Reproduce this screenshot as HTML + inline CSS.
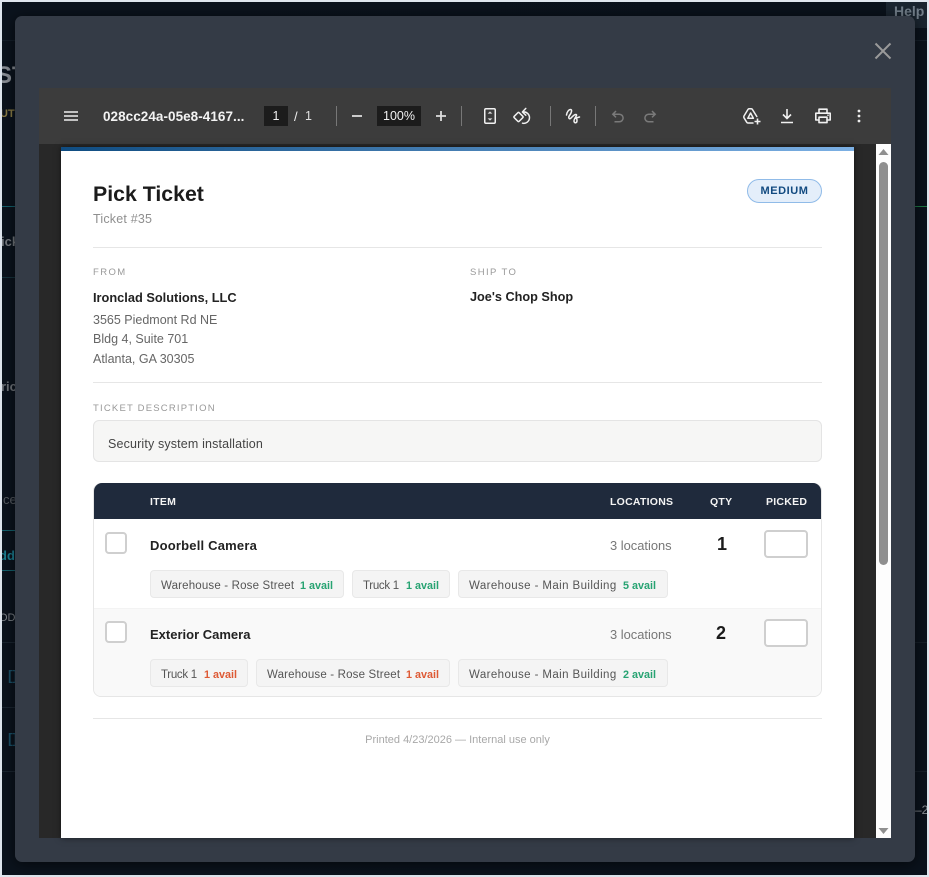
<!DOCTYPE html>
<html><head><meta charset="utf-8"><style>
html,body{margin:0;padding:0;width:929px;height:877px;overflow:hidden;background:#dfe6ee}
*{box-sizing:border-box}
body{font-family:"Liberation Sans",sans-serif;position:relative}
.a{position:absolute;white-space:nowrap}
.bg{position:absolute;left:2px;top:2px;width:925px;height:873px;background:linear-gradient(90deg,#0b131d,#0a121c);overflow:hidden}
.hl{position:absolute;height:1px;left:0;width:20px}
.tb{fill:none;stroke:#f1f1f1;stroke-width:1.5;stroke-linecap:round;stroke-linejoin:round}
.sep{position:absolute;top:106px;width:1px;height:20px;background:#777}
.lbl{font-size:9.5px;color:#999;letter-spacing:1.4px}
.addr{font-size:12.5px;color:#666}
.th{font-size:10.5px;font-weight:bold;color:#f4f4f4;letter-spacing:.25px}
.name{font-size:13px;font-weight:bold;color:#222}
.loc{font-size:12.9px;color:#777}
.chip{position:absolute;height:28px;background:#f4f4f4;border:1px solid #e8e8e8;border-radius:4px;font-size:11.5px;color:#555;line-height:30px;padding-left:10px;white-space:nowrap}
.chip b{position:absolute;font-weight:bold;font-size:10.8px;top:0;letter-spacing:0}
.g{color:#27a372}.r{color:#de5a35}
.cb{position:absolute;left:105px;width:22px;height:22px;background:#fff;border:2px solid #cfcfcf;border-radius:4px}
.pk{position:absolute;left:764px;width:44px;height:28px;background:#fff;border:2px solid #cfcfcf;border-radius:4px}
</style></head><body>
<div class="bg">
<div class="hl" style="top:204px;background:#14606c"></div>
<div class="hl" style="top:275px;background:#16323c"></div>
<div class="hl" style="top:204px;left:900px;width:25px;background:#1d7a45"></div>
<div class="hl" style="top:528px;background:#14606c"></div>
<div class="hl" style="top:568px;background:#14606c"></div>
<div class="hl" style="top:640px;background:#1a2530"></div>
<div class="hl" style="top:705px;background:#1a2530"></div>
<div class="hl" style="top:769px;background:#1a2530"></div>
<div class="hl" style="top:640px;left:900px;width:25px;background:#161f29"></div>
<div class="hl" style="top:769px;left:900px;width:25px;background:#161f29"></div>
<div style="position:absolute;left:0;top:38px;width:925px;height:1px;background:#141e29"></div>
<div class="a" style="left:-6px;top:60px;font-size:24px;font-weight:bold;color:#8b9097">ST</div>
<div class="a" style="left:-2px;top:106px;font-size:11px;font-weight:bold;color:#8a7c45">UT</div>
<div class="a" style="left:-1px;top:232px;font-size:13px;font-weight:bold;color:#767b80">ick</div>
<div class="a" style="left:-1px;top:377px;font-size:13px;font-weight:bold;color:#6e7379">ric</div>
<div class="a" style="left:1px;top:490px;font-size:13px;color:#555a60">ce</div>
<div class="a" style="left:-3px;top:546px;font-size:13px;font-weight:bold;color:#1c7f92">dd</div>
<div class="a" style="left:-3px;top:610px;font-size:11px;color:#7e8389">OD</div>
<div class="a" style="left:6px;top:665px;font-size:14px;font-weight:bold;color:#1a5068">[]</div>
<div class="a" style="left:6px;top:728px;font-size:14px;font-weight:bold;color:#1a5068">[]</div>
<div class="a" style="left:884px;top:0;width:41px;height:26px;background:#1a2530"></div>
<div class="a" style="left:892px;top:1px;font-size:14px;font-weight:bold;color:#74808c">Help</div>
<div class="a" style="left:913px;top:801px;font-size:12px;color:#8a8f95">–2</div>
</div>

<div class="a" style="left:15px;top:16px;width:900px;height:846px;background:#343b46;border-radius:7px;box-shadow:0 2px 14px rgba(0,0,0,.6)"></div>
<svg class="a" style="left:873px;top:41px" width="20" height="20" viewBox="0 0 20 20"><path d="M2.5 2.5L17.5 17.5M17.5 2.5L2.5 17.5" stroke="#9a9a9a" stroke-width="2" fill="none"/></svg>

<div class="a" style="left:39px;top:88px;width:852px;height:750px;background:#282828"></div>
<div class="a" style="left:39px;top:88px;width:852px;height:56px;background:#3c3c3c"></div>

<svg class="a" style="left:64px;top:111px" width="14" height="10"><path d="M0 1h14M0 5h14M0 9h14" stroke="#eee" stroke-width="1.4"/></svg>
<div class="a" style="left:103px;top:109px;font-size:13.5px;font-weight:bold;color:#f3f3f3;letter-spacing:.05px">028cc24a-05e8-4167...</div>
<div class="a" style="left:264px;top:106px;width:24px;height:20px;background:#1c1c1c;color:#f0f0f0;font-size:12.5px;text-align:center;line-height:20px">1</div>
<div class="a" style="left:294px;top:109px;font-size:13px;color:#f0f0f0">/</div>
<div class="a" style="left:305px;top:109px;font-size:12.5px;color:#e0e0e0">1</div>
<div class="sep" style="left:336px"></div>
<svg class="a" style="left:351px;top:111px" width="12" height="10"><path d="M1 5h10" stroke="#ddd" stroke-width="1.8"/></svg>
<div class="a" style="left:377px;top:106px;width:44px;height:20px;background:#1c1c1c;color:#f0f0f0;font-size:12.5px;text-align:center;line-height:20px">100%</div>
<svg class="a" style="left:435px;top:110px" width="12" height="12"><path d="M1 6h10M6 1v10" stroke="#ddd" stroke-width="1.8"/></svg>
<div class="sep" style="left:461px"></div>
<svg class="a" style="left:482px;top:107px" width="16" height="18" viewBox="0 0 16 18"><rect class="tb" x="2.75" y="1.75" width="10.5" height="14.5" rx="1.2"/><path d="M5.6 6.6L8 4.4 10.4 6.6zM5.6 11.4L8 13.6 10.4 11.4z" fill="#d8d8d8"/></svg>
<svg class="a" style="left:512px;top:106px" width="20" height="20" viewBox="0 0 20 20"><rect class="tb" x="3" y="7.5" width="7" height="7" rx="1" transform="rotate(45 6.5 11)"/><path class="tb" d="M11 6A5.7 5.7 0 1 1 10.5 17.2"/><path class="tb" d="M13.8 2.4L10.4 6l3.4 3.2"/></svg>
<div class="sep" style="left:550px"></div>
<svg class="a" style="left:564px;top:107px" width="17" height="18" viewBox="0 0 17 18"><path class="tb" d="M2.5 8C3 4.5 5 2.5 6.5 2.5C8.5 2.5 7.5 6 5.5 8.5C4 10.5 5 12.5 6.5 11.5C8.5 10 10 7 12 7.5C14 8 10 11 10 14C10 16.5 13 16.5 13 13.5C13 12 12.5 11.2 11.5 11.2L15.5 10"/></svg>
<div class="sep" style="left:595px"></div>
<svg class="a" style="left:611px;top:109px" width="14" height="15" viewBox="0 0 14 15"><path d="M5 2L1.8 5.2 5 8.4M2 5.2h6.3a3.8 3.8 0 0 1 0 7.6H3.5" fill="none" stroke="#7a7a7a" stroke-width="1.5"/></svg>
<svg class="a" style="left:643px;top:109px" width="14" height="15" viewBox="0 0 14 15"><path d="M9 2l3.2 3.2L9 8.4M12 5.2H5.7a3.8 3.8 0 0 0 0 7.6h4.8" fill="none" stroke="#7a7a7a" stroke-width="1.5"/></svg>
<svg class="a" style="left:742px;top:107px" width="20" height="18" viewBox="0 0 20 18"><path class="tb" d="M14.8 9.5L10.3 2.3Q10 1.8 9.4 1.8H7Q6.4 1.8 6 2.4L2 9Q1.5 10 2 10.8L4.7 15.2Q5.2 16 6 16H11"/><path class="tb" d="M8.6 6L5.8 11.3h5.6z"/><path d="M15.5 11.5v6M12.5 14.5h6" stroke="#f1f1f1" stroke-width="1.6"/></svg>
<svg class="a" style="left:780px;top:108px" width="14" height="16" viewBox="0 0 14 16"><path d="M7 1v9M3 6.5L7 10.5 11 6.5M1 14.5h12" fill="none" stroke="#f1f1f1" stroke-width="1.6"/></svg>
<svg class="a" style="left:814px;top:107px" width="18" height="18" viewBox="0 0 18 18"><path class="tb" style="stroke-width:1.6" d="M5 5.5V2.2h8v3.3M4.8 13H1.8V6.2h14.4V13h-3"/><rect class="tb" style="stroke-width:1.6" x="5" y="10.2" width="8" height="5.4"/><circle cx="14" cy="8.2" r=".8" fill="#f1f1f1"/></svg>
<svg class="a" style="left:855px;top:108px" width="8" height="16"><circle cx="4" cy="3" r="1.4" fill="#eee"/><circle cx="4" cy="8" r="1.4" fill="#eee"/><circle cx="4" cy="13" r="1.4" fill="#eee"/></svg>

<div class="a" style="left:876px;top:144px;width:15px;height:694px;background:#fdfdfd"></div>
<div class="a" style="left:879px;top:162px;width:9px;height:403px;background:#8f8f8f;border-radius:5px"></div>
<svg class="a" style="left:878px;top:148px" width="11" height="8"><path d="M5.5 1L10.5 7H.5z" fill="#8f8f8f"/></svg>
<svg class="a" style="left:878px;top:827px" width="11" height="8"><path d="M.5 1h10L5.5 7z" fill="#8f8f8f"/></svg>

<div class="a" style="left:61px;top:147px;width:793px;height:691px;background:#fff;box-shadow:0 0 6px rgba(0,0,0,.5)"></div>
<div class="a" style="left:61px;top:147px;width:793px;height:4px;background:linear-gradient(90deg,#0f4c81,#7cb0e4)"></div>

<div class="a" style="left:93px;top:182px;font-size:21.3px;font-weight:bold;color:#1b1b1b">Pick Ticket</div>
<div class="a" style="left:93px;top:212px;font-size:12.5px;color:#8f8f8f;letter-spacing:.2px">Ticket #35</div>
<div class="a" style="left:747px;top:179px;width:75px;height:24px;background:#e4eefa;border:1px solid #90bbe8;border-radius:12px;color:#124a80;font-size:11px;font-weight:bold;text-align:center;line-height:23px;letter-spacing:.55px">MEDIUM</div>
<div class="a" style="left:93px;top:247px;width:729px;height:1px;background:#e6e6e6"></div>

<div class="a lbl" style="left:93px;top:267px">FROM</div>
<div class="a lbl" style="left:470px;top:267px">SHIP TO</div>
<div class="a" style="left:93px;top:290px;font-size:12.8px;font-weight:bold;color:#222">Ironclad Solutions, LLC</div>
<div class="a" style="left:470px;top:290px;font-size:12.7px;font-weight:bold;color:#222">Joe's Chop Shop</div>
<div class="a addr" style="left:93px;top:313px">3565 Piedmont Rd NE</div>
<div class="a addr" style="left:93px;top:332px">Bldg 4, Suite 701</div>
<div class="a addr" style="left:93px;top:352px">Atlanta, GA 30305</div>
<div class="a" style="left:93px;top:382px;width:729px;height:1px;background:#e6e6e6"></div>

<div class="a lbl" style="left:93px;top:403px;letter-spacing:1.2px">TICKET DESCRIPTION</div>
<div class="a" style="left:93px;top:420px;width:729px;height:42px;background:#f6f6f5;border:1px solid #e4e4e4;border-radius:6px"></div>
<div class="a" style="left:108px;top:437px;font-size:12.5px;color:#444;letter-spacing:.15px">Security system installation</div>

<div class="a" style="left:93px;top:483px;width:729px;height:214px;background:#fff;border:1px solid #e6e6e6;border-radius:8px"></div>
<div class="a" style="left:94px;top:483px;width:727px;height:36px;background:#1f2a3c;border-radius:8px 8px 0 0"></div>
<div class="a" style="left:94px;top:608px;width:727px;height:88px;background:#f9f9f9;border-top:1px solid #f3f3f3;border-radius:0 0 7px 7px"></div>
<div class="a th" style="left:150px;top:496px">ITEM</div>
<div class="a th" style="left:610px;top:496px">LOCATIONS</div>
<div class="a th" style="left:710px;top:496px">QTY</div>
<div class="a th" style="left:766px;top:496px">PICKED</div>

<div class="cb" style="top:532px"></div>
<div class="a name" style="left:150px;top:538px;letter-spacing:.2px">Doorbell Camera</div>
<div class="a loc" style="left:610px;top:538px">3 locations</div>
<div class="a" style="left:717px;top:534px;font-size:18px;font-weight:bold;color:#1b1b1b">1</div>
<div class="pk" style="top:530px"></div>
<div class="chip" style="left:150px;top:570px;width:194px;letter-spacing:.17px">Warehouse - Rose Street<b class="g" style="left:149px">1 avail</b></div>
<div class="chip" style="left:352px;top:570px;width:98px;letter-spacing:-.3px">Truck 1<b class="g" style="left:53px">1 avail</b></div>
<div class="chip" style="left:458px;top:570px;width:210px;letter-spacing:.4px">Warehouse - Main Building<b class="g" style="left:164px">5 avail</b></div>

<div class="cb" style="top:621px"></div>
<div class="a name" style="left:150px;top:627px">Exterior Camera</div>
<div class="a loc" style="left:610px;top:627px">3 locations</div>
<div class="a" style="left:716px;top:623px;font-size:18px;font-weight:bold;color:#1b1b1b">2</div>
<div class="pk" style="top:619px"></div>
<div class="chip" style="left:150px;top:659px;width:98px;letter-spacing:-.3px">Truck 1<b class="r" style="left:53px">1 avail</b></div>
<div class="chip" style="left:256px;top:659px;width:194px;letter-spacing:.17px">Warehouse - Rose Street<b class="r" style="left:149px">1 avail</b></div>
<div class="chip" style="left:458px;top:659px;width:210px;letter-spacing:.4px">Warehouse - Main Building<b class="g" style="left:164px">2 avail</b></div>

<div class="a" style="left:93px;top:718px;width:729px;height:1px;background:#e6e6e6"></div>
<div class="a" style="left:93px;top:734px;width:729px;text-align:center;font-size:11px;color:#a8a8a8">Printed 4/23/2026 — Internal use only</div>
</body></html>
